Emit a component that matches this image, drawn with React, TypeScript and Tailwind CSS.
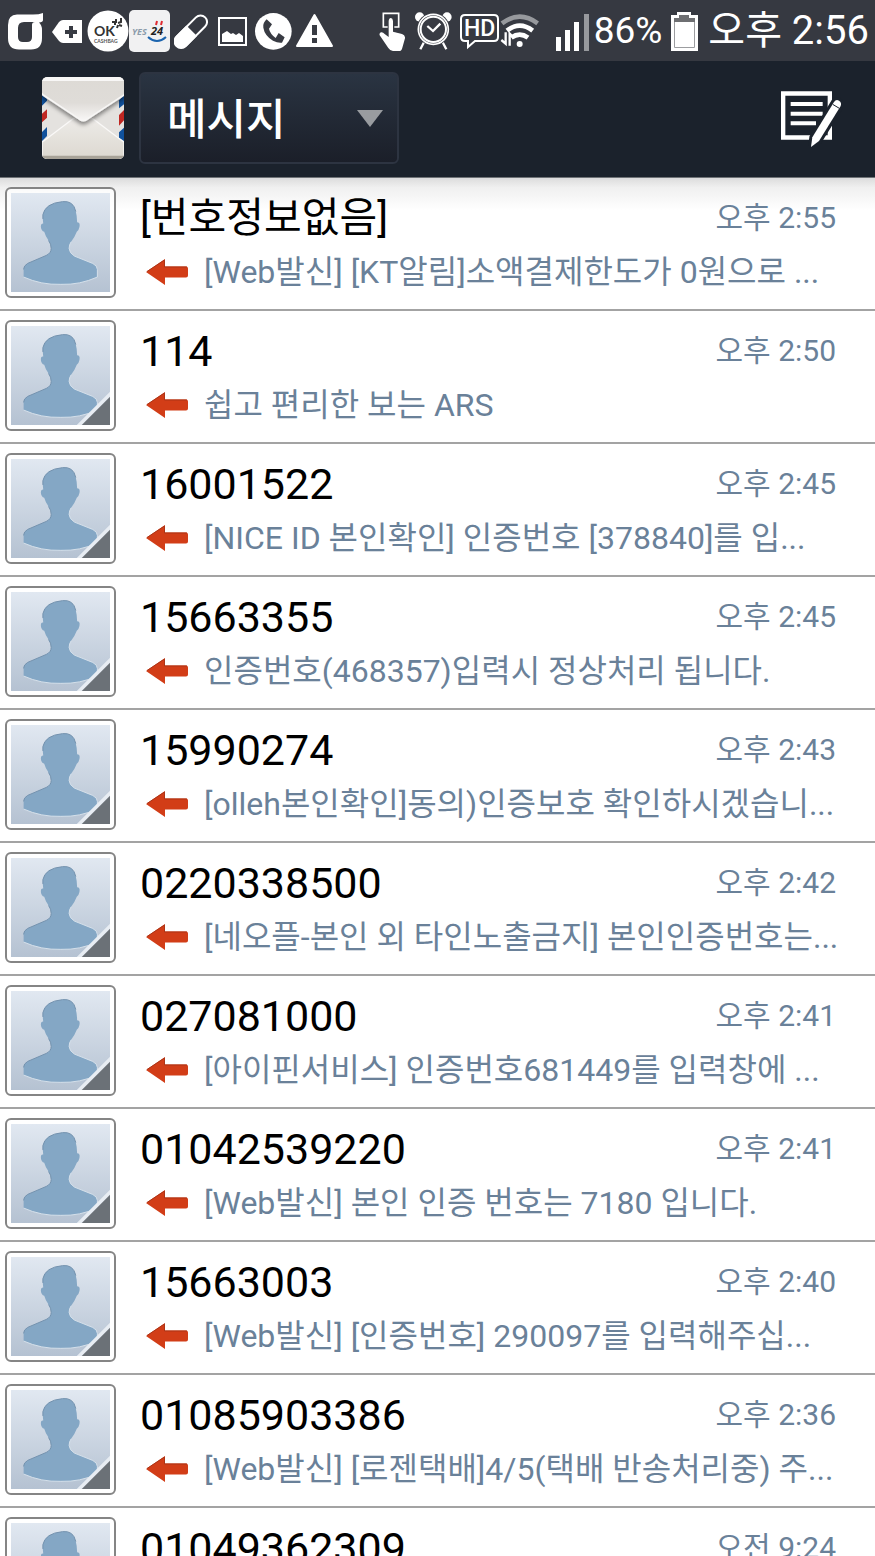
import clsx from 'clsx'

type Thread = {
  sender: string
  preview: string
  time: string
  // no number came with the message, so there is no contact menu on the photo
  unknown?: boolean
}

const threads: Thread[] = [
  { sender: '[번호정보없음]', preview: '[Web발신] [KT알림]소액결제한도가 0원으로 ...', time: '오후 2:55', unknown: true },
  { sender: '114', preview: '쉽고 편리한 보는 ARS', time: '오후 2:50' },
  { sender: '16001522', preview: '[NICE ID 본인확인] 인증번호 [378840]를 입...', time: '오후 2:45' },
  { sender: '15663355', preview: '인증번호(468357)입력시 정상처리 됩니다.', time: '오후 2:45' },
  { sender: '15990274', preview: '[olleh본인확인]동의)인증보호 확인하시겠습니...', time: '오후 2:43' },
  { sender: '0220338500', preview: '[네오플-본인 외 타인노출금지] 본인인증번호는...', time: '오후 2:42' },
  { sender: '027081000', preview: '[아이핀서비스] 인증번호681449를 입력창에 ...', time: '오후 2:41' },
  { sender: '01042539220', preview: '[Web발신] 본인 인증 번호는 7180 입니다.', time: '오후 2:41' },
  { sender: '15663003', preview: '[Web발신] [인증번호] 290097를 입력해주십...', time: '오후 2:40' },
  { sender: '01085903386', preview: '[Web발신] [로젠택배]4/5(택배 반송처리중) 주...', time: '오후 2:36' },
  { sender: '01049362309', preview: '', time: '오전 9:24' },
]

function NotificationIcons() {
  return (
    <div className="flex shrink-0 items-center">
      <svg width="36" height="60" viewBox="0 0 36 60" fill="#fff">
        <path
          fillRule="evenodd"
          d="M9 13.500H25Q31 13.500 35 12V19Q35 21 31 21.500Q34 24 34 29V37Q34 48.500 23 48.500H11Q0 48.500 0 37V24Q0 13.500 9 13.500ZM16 21Q10 21 10 27V36Q10 41 15 41H19Q24 41 24 36V24Q24 21 27 21Z"
        />
      </svg>
      <svg className="ml-2" width="30" height="60" viewBox="0 0 30 60">
        <path d="M0 31L7 21Q9 19 11 19H30V42H11Q9 42 7 40Z" fill="#fff" />
        <path d="M19 25V37M13 31H25" stroke="#383b43" strokeWidth="4" />
      </svg>
      <svg className="ml-[5px]" width="42" height="60" viewBox="0 0 42 60">
        <circle cx="21" cy="30" r="20.500" fill="#fff" />
        <text x="7" y="35" fontSize="14" fill="#333" className="font-['Lato',sans-serif] font-bold">OK</text>
        <text x="7" y="42" fontSize="5" fill="#555" className="font-['Lato',sans-serif] font-bold">CASHBAG</text>
        <path
          d="M25 21H29V18M34 17V21L31 22M28 24V22M31 24L30 27M32 24L35 25"
          stroke="#333"
          strokeWidth="2"
          fill="none"
        />
      </svg>
      <svg width="41" height="60" viewBox="0 0 41 60">
        <rect y="9" width="41" height="42" rx="5" fill="#f1f1f2" />
        <text x="3" y="34" fontSize="9" fill="#8b9cab" className="font-['Open_Sans',sans-serif] font-bold italic">YES</text>
        <text x="22" y="34" fontSize="11" fill="#222" className="font-['Open_Sans',sans-serif] font-bold italic">24</text>
        <path d="M27 24L28 20M32 24L33 20" stroke="#e02a30" strokeWidth="2" />
        <path d="M19 36Q28 44 37 36" stroke="#1c64ae" strokeWidth="2" fill="none" />
      </svg>
      <svg className="ml-1" width="34" height="60" viewBox="0 0 34 60">
        <g transform="translate(17 30.500) rotate(-45)">
          <rect x="-20" y="-6.500" width="40" height="13" rx="6.500" fill="none" stroke="#fff" strokeWidth="2" />
          <path d="M1 -7.500H-14A7.500 7.500 0 0 0 -14 7.500H1Z" fill="#fff" />
        </g>
      </svg>
      <svg className="ml-[10px]" width="29" height="60" viewBox="0 0 29 60">
        <rect x="1" y="17" width="27" height="27" fill="none" stroke="#fff" strokeWidth="2" />
        <path d="M4 41V33L9 30L13 33L15 32L18 34L21 32L25 35V41Z" fill="#fff" />
      </svg>
      <svg className="ml-2" width="37" height="60" viewBox="0 0 111 180">
        <circle cx="55" cy="91" r="55" fill="#fff" />
        <path
          d="M35 55L51 70L42 83Q45 98 62 111L71 96L89 109L81 125Q69 127 54 119Q29 104 25 80Q22 67 35 55Z"
          fill="#383b43"
        />
      </svg>
      <svg className="ml-1" width="37" height="60" viewBox="0 0 37 60">
        <path d="M18.500 14L36 45H1Z" fill="#fff" stroke="#fff" strokeWidth="2" strokeLinejoin="round" />
        <path d="M18.500 24V34M18.500 37V42" stroke="#383b43" strokeWidth="5" />
      </svg>
    </div>
  )
}

function SystemIcons() {
  return (
    <div className="flex shrink-0 items-center">
      <svg width="26" height="60" viewBox="38 0 78 180">
        <path d="M64 78H51V37H97V78H84" stroke="#fff" strokeWidth="5" fill="none" />
        <path
          d="M67 60Q68 51 73.500 51Q79 51 80 60V92L107 99Q117 102 116 112L108 140Q106 150 98 150H80Q72 150 66 141L40 103Q38 96 44 94Q50 93 55 99L67 108Z"
          fill="#fff"
        />
      </svg>
      <svg className="ml-[10px]" width="37" height="60" viewBox="147 0 111 180" fill="none" stroke="#fff">
        <circle cx="161" cy="48" r="14" fill="#fff" stroke="none" />
        <circle cx="243" cy="48" r="14" fill="#fff" stroke="none" />
        <path d="M174 124L163 145M230 124L241 145" strokeWidth="7" />
        <circle cx="202" cy="85" r="50" fill="#383b43" stroke="none" />
        <circle cx="202" cy="85" r="45" strokeWidth="5" />
        <circle cx="202" cy="85" r="38" strokeWidth="6" />
        <path d="M184 75L201 90L223 68" strokeWidth="7" />
      </svg>
      <svg className="ml-[7px]" width="41" height="60" viewBox="0 0 41 60">
        <path
          d="M6 14H35Q39 14 39 18V36Q39 40 35 40H16L9 46V40H6Q2 40 2 36V18Q2 14 6 14Z"
          fill="none"
          stroke="#fff"
          strokeWidth="2"
        />
        <text x="5" y="35" fontSize="23" fill="#fff" className="font-['Roboto',sans-serif] font-medium">HD</text>
      </svg>
      <svg width="39" height="60" viewBox="402 0 117 180" fill="none">
        <path d="M408 67Q461 27 515 67" stroke="#97999d" strokeWidth="14" />
        <path d="M423 89Q461 59 500 89" stroke="#fff" strokeWidth="14" />
        <path d="M436 110Q461 92 486 110" stroke="#fff" strokeWidth="14" />
        <circle cx="461" cy="129" r="9" fill="#fff" />
        <path d="M419 94V128L406 117M431 134V98L442 109" stroke="#fff" strokeWidth="7" />
      </svg>
      <svg className="ml-[17px]" width="33" height="60" viewBox="0 0 33 60" fill="#fff">
        <path d="M0 36H5V50H0ZM9 29H14V50H9ZM18 21H23V50H18Z" />
        <path d="M28 13H33V50H28Z" fill="#97999d" />
      </svg>
      <span className="ml-[5px] text-[37px]">86%</span>
      <svg className="ml-[9px]" width="27" height="60" viewBox="0 0 27 60">
        <path d="M0 14H6V11H20V14H27V50H0Z" fill="#fff" />
        <path d="M3 17H8V14H18V17H24V21H3Z" fill="#6e6f72" />
        <path d="M3.500 21V46.500H23.500V21" fill="none" stroke="#9c9da0" />
      </svg>
      <span className="ml-[10px] text-[40px]">오후 2:56</span>
    </div>
  )
}

function EnvelopeIcon() {
  return (
    <svg className="shrink-0" width="82" height="82" viewBox="0 0 246 246">
      <defs>
        <clipPath id="envelope">
          <rect width="246" height="246" rx="16" />
        </clipPath>
        <linearGradient id="flap" x1="0" y1="0" x2="0" y2="1">
          <stop offset="0" stopColor="#dddad5" />
          <stop offset="0.600" stopColor="#dfdcd8" />
          <stop offset="1" stopColor="#f8f7f6" />
        </linearGradient>
        <linearGradient id="pocket" x1="0" y1="0" x2="0" y2="1">
          <stop offset="0" stopColor="#eeece9" />
          <stop offset="1" stopColor="#dcd8d0" />
        </linearGradient>
        <filter id="flapShadow" x="-20%" y="-20%" width="140%" height="150%">
          <feDropShadow dx="0" dy="9" stdDeviation="6" floodColor="#000" floodOpacity="0.450" />
        </filter>
      </defs>
      <g clipPath="url(#envelope)">
        <rect width="246" height="246" fill="#e4e2df" />
        <path d="M0 55L15 66V71L0 86ZM0 165L15 150V177L0 192ZM246 55L231 70V94L246 82ZM246 152L231 166V182L246 192Z" fill="#10519c" />
        <path d="M0 110L15 97V122L0 136ZM246 99L231 114V146L246 130Z" fill="#c02722" />
        <path d="M0 196L92 126Q123 105 154 126L246 196V246H0Z" fill="url(#pocket)" stroke="#faf9f8" strokeWidth="4" />
        <path d="M0 236H246V246H0Z" fill="#a8a398" />
        <path
          d="M-4 -4H250V46L246 54L138 125Q124 137 110 125L4 54L-4 46Z"
          fill="url(#flap)"
          stroke="#f7f6f5"
          strokeWidth="5"
          filter="url(#flapShadow)"
        />
        <path d="M0 0H246V12H0Z" fill="#f8f7f6" />
      </g>
    </svg>
  )
}

function ComposeIcon() {
  return (
    <svg width="63" height="57" viewBox="0 0 189 171">
      <path d="M9.500 10.500H149.500V142.500H9.500Z" fill="none" stroke="#fff" strokeWidth="13" />
      <path d="M32 42H128M32 71H128M32 100H108" stroke="#fff" strokeWidth="12" />
      <path
        d="M93 171L97 142L162 36Q168 27 177 32Q186 38 182 48L117 153Z"
        fill="#fff"
        stroke="#1b222c"
        strokeWidth="18"
        paintOrder="stroke"
      />
      <path d="M158 43L178 55" stroke="#1b222c" strokeWidth="3" />
    </svg>
  )
}

function ContactPhoto({ hasMenu }: { hasMenu: boolean }) {
  return (
    <div className="h-[111px] w-[111px] shrink-0 rounded-md border-2 border-[#858585] bg-white/70 p-1">
      <svg className="block h-full w-full" viewBox="0 0 298 298">
        <defs>
          <linearGradient id="photo" x1="0" y1="0" x2="0" y2="1">
            <stop offset="0" stopColor="#e1e8f1" />
            <stop offset="1" stopColor="#b5c2d2" />
          </linearGradient>
        </defs>
        <rect width="298" height="298" fill="url(#photo)" />
        <path
          d="M155 26Q188 22 195 56Q199 70 199 88Q209 88 206 102Q204 112 198 117Q192 133 181 147Q175 156 175 167Q176 181 191 190L246 212Q260 219 260 230V253Q207 277 150 275Q91 277 38 253V230Q38 219 50 212L106 188Q121 181 121 167Q121 153 113 143Q103 129 100 117Q91 113 90 102Q89 91 97 92Q95 78 96 65Q103 31 155 26Z"
          fill="#84a7c5"
        />
        <path d="M181 147Q175 156 175 167Q176 181 191 190L246 212Q260 219 260 230V253Q207 277 150 275Q91 277 38 253" fill="none" stroke="#d5e0ea" strokeWidth="3" />
        <path d="M38 230Q38 219 50 212L106 188Q121 181 121 167Q121 153 113 143M96 78V65Q103 31 155 26Q188 22 195 56" fill="none" stroke="#7392ae" strokeWidth="3" />
        {hasMenu && (
          <>
            <path d="M298 198V298H198Z" fill="#e8edf3" />
            <path d="M298 213V298H213Z" fill="#6b7177" />
          </>
        )}
      </svg>
    </div>
  )
}

function ReceivedArrow() {
  return (
    <svg className="shrink-0" width="42" height="26" viewBox="0 0 42 26">
      <path d="M0 13L19 0V7.500H40Q42 7.500 42 9.500V16.500Q42 18.500 40 18.500H19V26Z" fill="#d23d17" />
      <path d="M1 12.500L18.500 1V8H41" fill="none" stroke="#ac3517" />
    </svg>
  )
}

function ThreadRow({ thread }: { thread: Thread }) {
  return (
    <li className="h-[133px] border-b-2 border-[#a3a3a3]">
      <a href="#" className="flex pl-[5px] pt-[9px]">
        <ContactPhoto hasMenu={!thread.unknown} />
        <div className="min-w-0 flex-1 pl-6 pt-[7px]">
          <div className="flex h-12 justify-between pr-[39px]">
            <span className={clsx('leading-[48px] text-black', thread.unknown ? 'text-[41px]' : 'text-[43px]')}>
              {thread.sender}
            </span>
            <span className="whitespace-nowrap text-[30px] leading-[48px]">{thread.time}</span>
          </div>
          <div className="mt-[10px] flex h-10 items-center gap-4 pl-[6px]">
            <ReceivedArrow />
            <span className="truncate text-[32px] leading-[40px]">{thread.preview}</span>
          </div>
        </div>
      </a>
    </li>
  )
}

export default function App() {
  return (
    <div
      lang="ko"
      className="flex h-screen flex-col overflow-hidden bg-white font-['Roboto','Noto_Sans_CJK_KR',sans-serif] text-[#6a8199]"
    >
      <div className="flex h-[61px] shrink-0 items-center justify-between bg-[#363941] pl-2 pr-[6px] leading-[60px] text-white">
        <NotificationIcons />
        <SystemIcons />
      </div>

      <header className="flex h-[117px] shrink-0 items-center border-b border-[#6f7377] bg-[#1b222c] pb-[2px] pl-[42px] pr-8">
        <EnvelopeIcon />
        <div className="relative ml-[15px]">
          <select
            aria-label="메시지함"
            className="block h-[92px] w-[260px] appearance-none rounded-md border-2 border-[#2d3441] bg-linear-to-b from-[#2a3442] to-[#1b1f29] pl-[26px] pt-1 text-[43px] font-medium text-white"
          >
            <option>메시지</option>
          </select>
          <svg className="pointer-events-none absolute right-4 top-[38px]" width="26" height="18" viewBox="0 0 26 18">
            <path d="M0 0H26L13 17Z" fill="#999ca0" />
          </svg>
        </div>
        <button aria-label="새 메시지" className="ml-auto">
          <ComposeIcon />
        </button>
      </header>

      <ul className="min-h-0 flex-1 overflow-y-auto bg-[linear-gradient(#dcdcdc,#f0f0f0_30%,#fff)] bg-[length:100%_32px] bg-no-repeat [scrollbar-width:none]">
        {threads.map((thread) => (
          <ThreadRow key={thread.sender} thread={thread} />
        ))}
      </ul>
    </div>
  )
}
